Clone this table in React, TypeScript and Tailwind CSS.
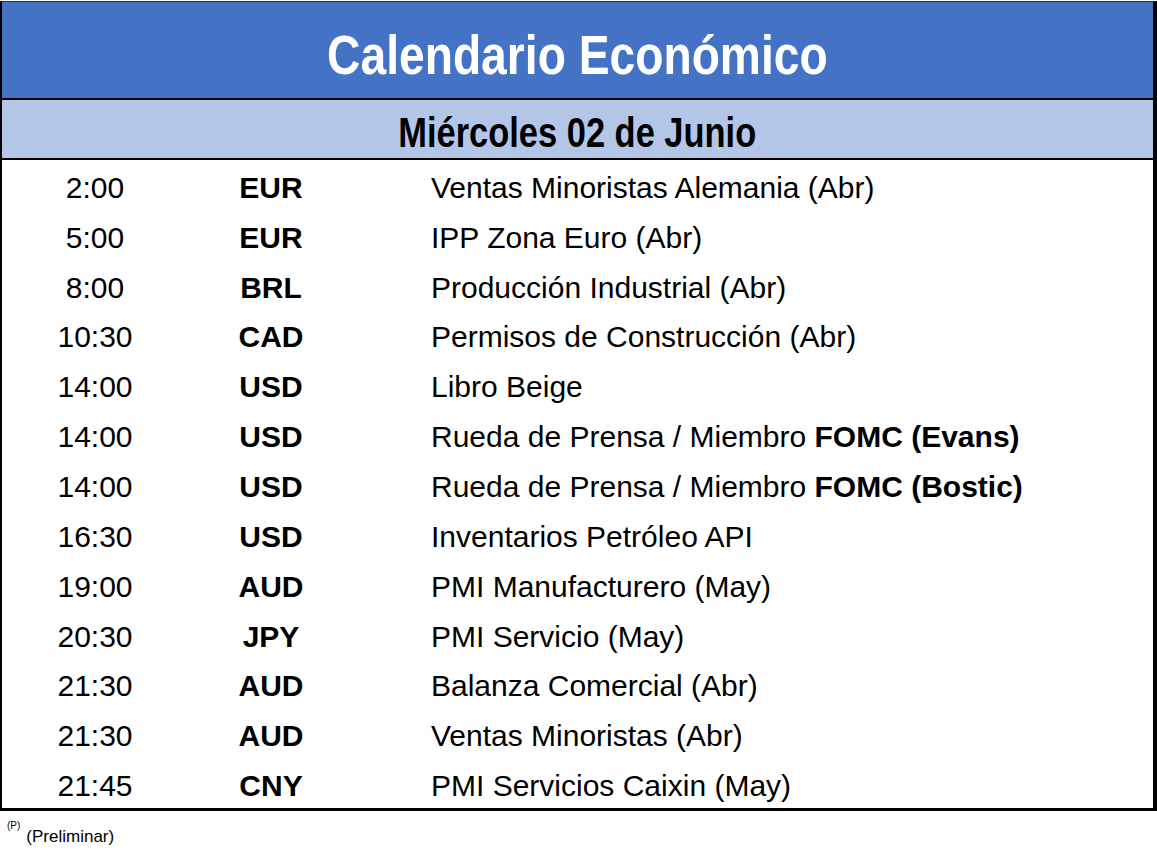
const events = [
  { time: "2:00", cur: "EUR", desc: "Ventas Minoristas Alemania (Abr)" },
  { time: "5:00", cur: "EUR", desc: "IPP Zona Euro (Abr)" },
  { time: "8:00", cur: "BRL", desc: "Producción Industrial (Abr)" },
  { time: "10:30", cur: "CAD", desc: "Permisos de Construcción (Abr)" },
  { time: "14:00", cur: "USD", desc: "Libro Beige" },
  { time: "14:00", cur: "USD", desc: "Rueda de Prensa / Miembro ", bold: "FOMC (Evans)" },
  { time: "14:00", cur: "USD", desc: "Rueda de Prensa / Miembro ", bold: "FOMC (Bostic)" },
  { time: "16:30", cur: "USD", desc: "Inventarios Petróleo API" },
  { time: "19:00", cur: "AUD", desc: "PMI Manufacturero (May)" },
  { time: "20:30", cur: "JPY", desc: "PMI Servicio (May)" },
  { time: "21:30", cur: "AUD", desc: "Balanza Comercial (Abr)" },
  { time: "21:30", cur: "AUD", desc: "Ventas Minoristas (Abr)" },
  { time: "21:45", cur: "CNY", desc: "PMI Servicios Caixin (May)" },
];

export default function App() {
  return (
    <div className="w-[1157px] h-[864px] bg-white font-['Liberation_Sans',Arial,sans-serif] text-black">
      <div className="mt-px w-[1157px] border-l-2 border-t border-r-4 border-b-[3px] border-black border-t-[#333]">
        {/* title + date use Arial Narrow in the sheet; no narrow face here so squeeze it */}
        <div className="h-[96px] bg-[#4472c4] flex items-center justify-center">
          <h1 className="inline-block scale-x-[0.825] text-white font-bold text-[56px] leading-none pt-[10px]">
            Calendario Económico
          </h1>
        </div>
        <div className="h-[62px] bg-[#b4c6e7] border-t-2 border-b-2 border-black flex items-center justify-center">
          <h2 className="inline-block scale-x-[0.82] font-bold text-[42px] leading-none pt-[8px]">
            Miércoles 02 de Junio
          </h2>
        </div>
        <div className="grid grid-rows-[repeat(13,1fr)] h-[648px]">
          {events.map((e, i) => (
            <div key={i} className="flex items-center text-[30px] leading-none pt-[6px]">
              <span className="w-[186px] text-center">{e.time}</span>
              <span className="w-[166px] text-center font-bold">{e.cur}</span>
              <span className="pl-[77px] whitespace-nowrap">
                {e.desc}
                {e.bold && <b>{e.bold}</b>}
              </span>
            </div>
          ))}
        </div>
      </div>
      <p className="mt-[17px] ml-[7px] text-[17px] leading-none">
        <sup className="text-[10px] align-[8px]">(P)</sup>
        <span className="ml-[6px]">(Preliminar)</span>
      </p>
    </div>
  );
}
